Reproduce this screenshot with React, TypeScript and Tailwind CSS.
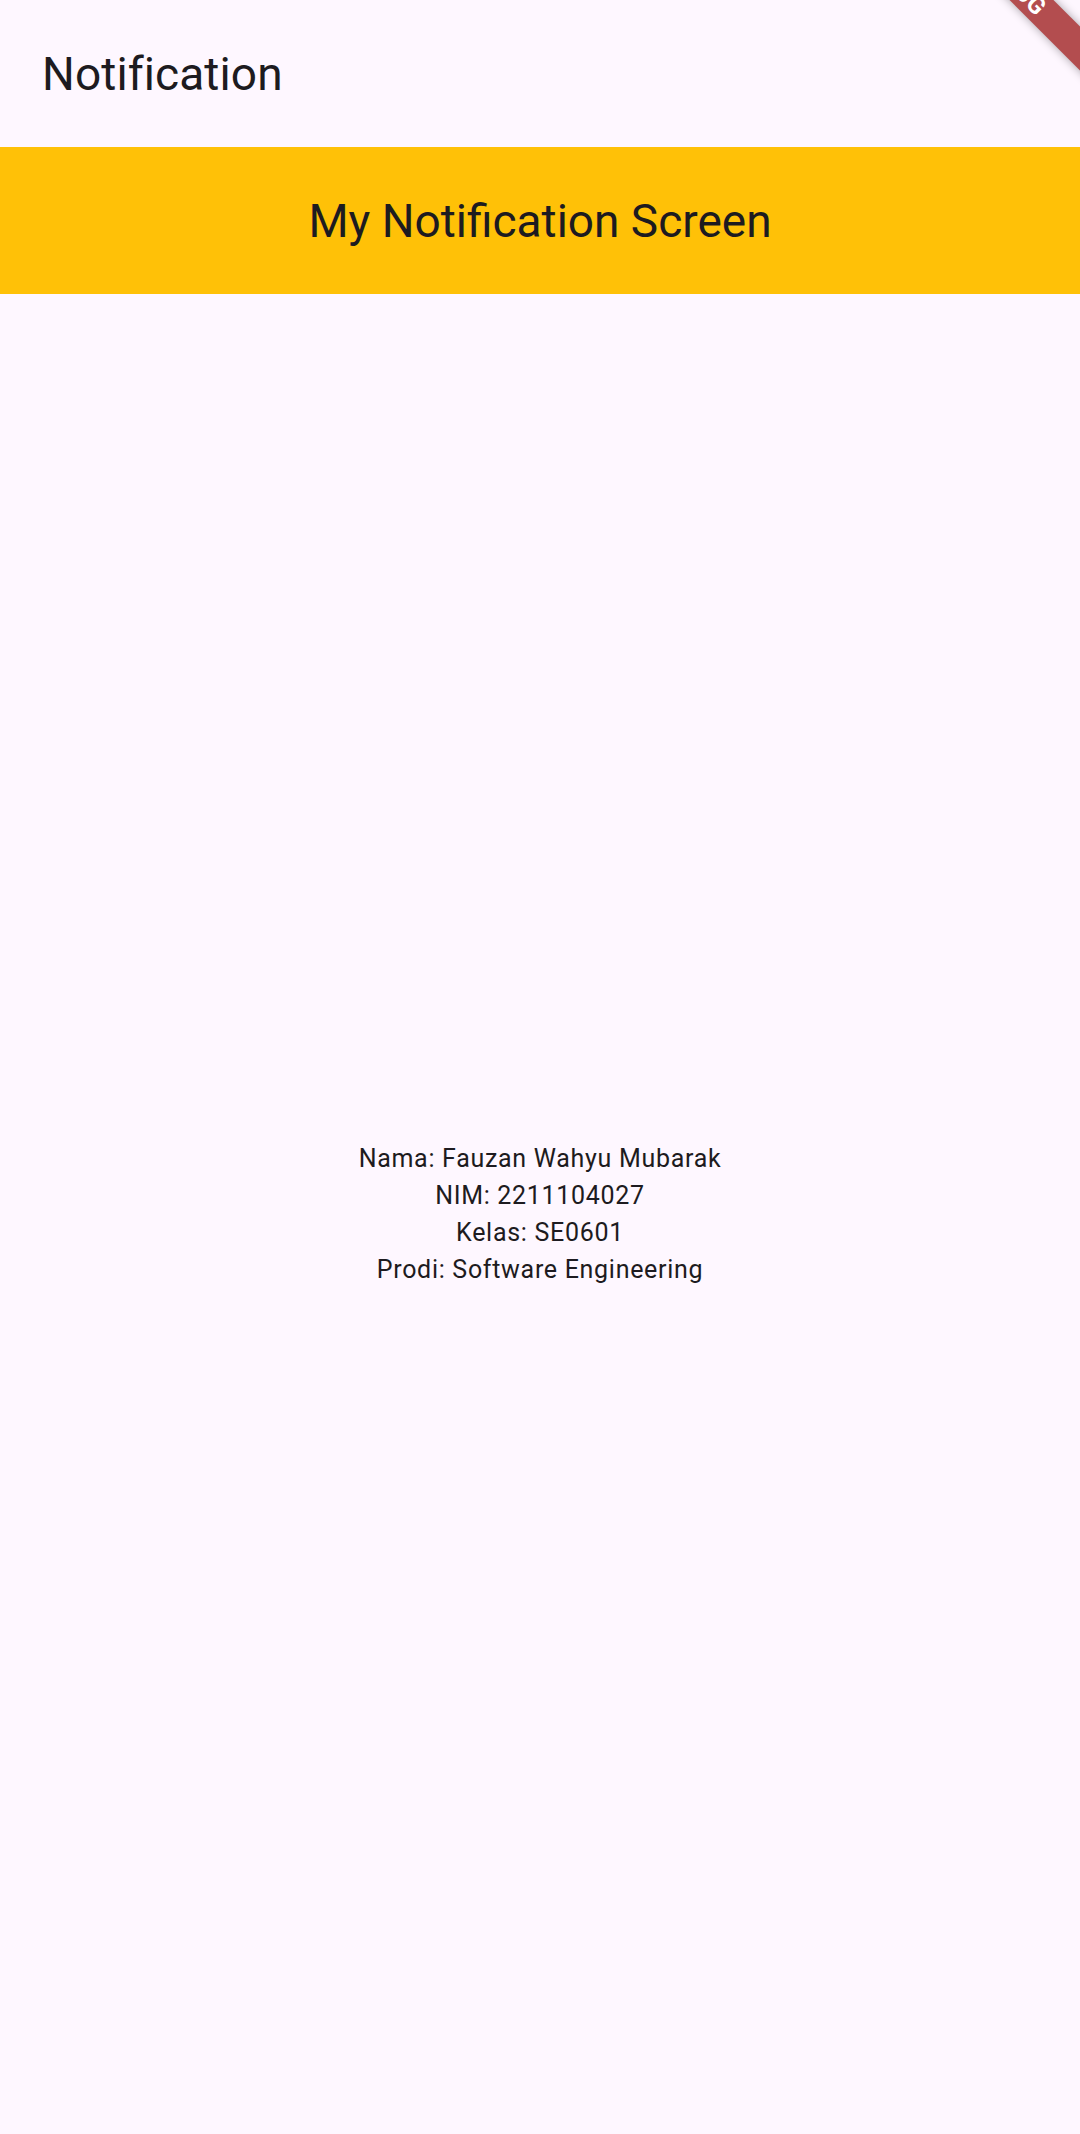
export default function App() {
  return (
    <div
      className="relative flex h-[2134px] w-[1080px] flex-col overflow-hidden bg-[#fef7ff] text-[#1d1b20]"
      style={{ fontFamily: "Roboto, 'Noto Sans', sans-serif" }}
    >
      <header className="flex h-[147px] shrink-0 items-center pl-[42px]">
        <h1 className="text-[46px] leading-none font-normal tracking-[0.1px]">Notification</h1>
      </header>
      <div className="flex h-[147px] shrink-0 items-center justify-center bg-[#ffc107]">
        <span className="text-[46px] leading-none">My Notification Screen</span>
      </div>
      <main className="flex flex-1 flex-col items-center justify-center text-[25px] leading-[37px] tracking-[0.7px]">
        <p>Nama: Fauzan Wahyu Mubarak</p>
        <p>NIM: 2211104027</p>
        <p>Kelas: SE0601</p>
        <p>Prodi: Software Engineering</p>
      </main>
      <div className="absolute left-[865px] top-[-32px] flex h-[31px] w-[300px] rotate-45 items-center justify-center bg-[#b34d4f] shadow-[0_0_10px_rgba(0,0,0,0.35)]">
        <span className="text-[24px] leading-none font-bold text-white">DEBUG</span>
      </div>
    </div>
  );
}
